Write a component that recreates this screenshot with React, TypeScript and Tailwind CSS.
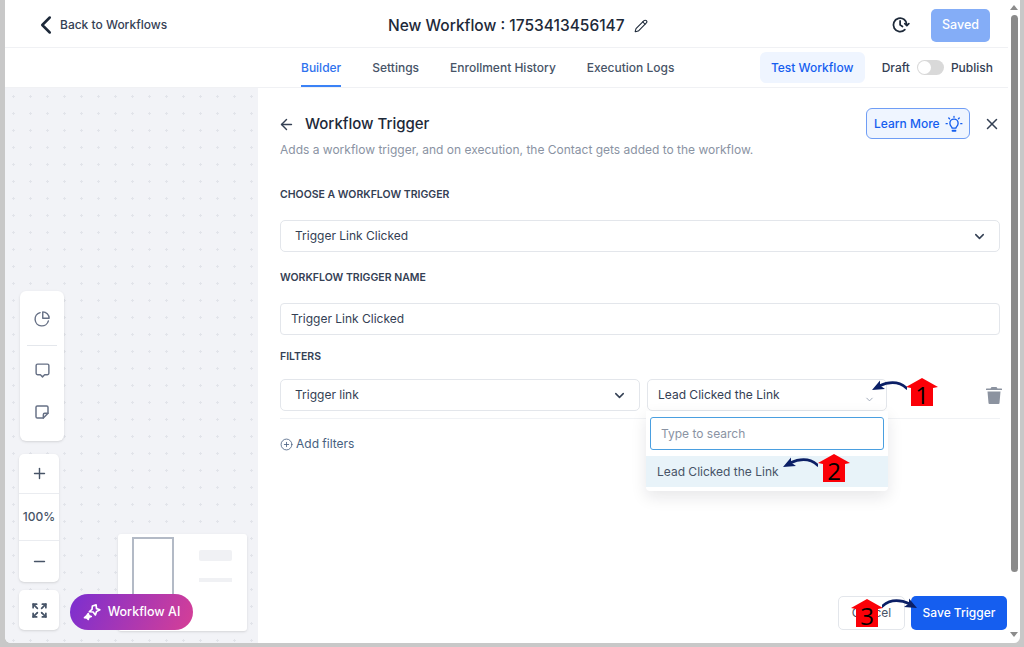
import { ArrowLeft, ChevronDown, ChevronLeft, CirclePlus, Expand, Minus, Pencil, Plus, X } from "lucide-react";

const labelClass = "text-[10.500px] leading-4 font-semibold uppercase text-[#344054]";

function SelectBox({ text, className }: { text: string; className: string }) {
  return (
    <div className={`flex items-center justify-between shrink-0 h-[32px] pl-[14px] pr-[12px] rounded-[5px] border border-[#e3e6eb] bg-white text-[12px] text-[#344054] ${className}`}>
      <span>{text}</span>
      <ChevronDown size={15} strokeWidth={2.400} className="text-[#344054]" />
    </div>
  );
}

function Marker({ n, className }: { n: string; className: string }) {
  return (
    <div className={`absolute w-[32px] h-[28px] ${className}`}>
      <svg viewBox="0 0 32 28" className="absolute inset-0 w-full h-full">
        <polygon points="16,0 32,9 27,10 27,28 5,28 5,10 0,9" fill="#fb0007" />
      </svg>
      <span className="absolute inset-0 pt-[4px] text-center text-[24px] leading-[26px] font-normal text-black font-['Open_Sans',sans-serif]">{n}</span>
    </div>
  );
}

function CurvedArrow({ className, flip }: { className: string; flip?: boolean }) {
  return (
    <svg viewBox="0 0 36 14" className={`absolute w-[36px] h-[14px] ${flip ? "-scale-x-100" : ""} ${className}`}>
      <path d="M36 9.500C29 3 20 1.500 8 7" fill="none" stroke="#0b1f66" strokeWidth="2.800" strokeLinecap="round" />
      <path d="M1 11L9 1.500L9 6.500L14 10Z" fill="#0b1f66" />
    </svg>
  );
}

function Canvas() {
  return (
    <div className="relative w-[253px] shrink-0 bg-[#f2f3f7] bg-[radial-gradient(#e2e4ea_1.2px,transparent_1.4px)] bg-[length:17px_17px] rounded-bl-[6px] overflow-hidden">
      <div className="absolute left-[15px] top-[203px] w-[44px] h-[150px] rounded-[6px] bg-white flex flex-col items-center shadow-sm">
        <svg viewBox="0 0 24 24" className="mt-[19px] w-[18px] h-[18px]" fill="none" stroke="#667085" strokeWidth="1.900" strokeLinecap="round" strokeLinejoin="round">
          <path d="M20.500 14.500A9 9 0 1 1 9.500 3.500" />
          <path d="M13 2.500a8.500 8.500 0 0 1 8.500 8.500H13Z" />
        </svg>
        <div className="mt-[17px] w-[30px] h-px bg-[#e4e7ec]" />
        <svg viewBox="0 0 24 24" className="mt-[16px] w-[17px] h-[17px]" fill="none" stroke="#667085" strokeWidth="2" strokeLinecap="round" strokeLinejoin="round">
          <path d="M5 3h14a2 2 0 0 1 2 2v11a2 2 0 0 1-2 2h-4l-3 3-3-3H5a2 2 0 0 1-2-2V5a2 2 0 0 1 2-2Z" />
        </svg>
        <svg viewBox="0 0 24 24" className="mt-[25px] w-[16px] h-[16px]" fill="none" stroke="#667085" strokeWidth="2.200" strokeLinecap="round" strokeLinejoin="round">
          <path d="M21 14V5a2 2 0 0 0-2-2H5a2 2 0 0 0-2 2v14a2 2 0 0 0 2 2h9Z" />
          <path d="M21 14h-5a2 2 0 0 0-2 2v5" />
        </svg>
      </div>
      <div className="absolute left-[14px] top-[366px] w-[40px] h-[128px] rounded-[5px] bg-white flex flex-col items-center text-[#475467] shadow-sm">
        <div className="h-[40px] w-full flex items-center justify-center border-b border-[#eaecf0]"><Plus size={17} strokeWidth={2} /></div>
        <div className="h-[47px] w-full flex items-center justify-center border-b border-[#eaecf0] text-[12px] font-medium">100%</div>
        <div className="flex-1 w-full flex items-center justify-center"><Minus size={17} strokeWidth={2} /></div>
      </div>
      <div className="absolute left-[14px] top-[502px] w-[40px] h-[40px] rounded-[5px] bg-white flex items-center justify-center text-[#475467] shadow-sm">
        <Expand size={17} strokeWidth={2.400} />
      </div>
      <div className="absolute left-[113px] top-[446px] w-[129px] h-[97px] rounded-[3px] bg-white shadow-sm">
        <div className="absolute left-[14px] top-[3px] w-[42px] h-[70px] border-2 border-[#b3bac6]" />
        <div className="absolute left-[81px] top-[16px] w-[33px] h-[11px] rounded-[2px] bg-[#f0f1f4]" />
        <div className="absolute left-[81px] top-[44px] w-[33px] h-[4px] bg-[#f0f1f4]" />
      </div>
      <div className="absolute left-[65px] top-[506px] w-[123px] h-[36px] rounded-full flex items-center justify-center gap-[7px] bg-[linear-gradient(115deg,#7b2fd0,#d63f96)] text-white text-[12.500px] font-medium">
        <svg viewBox="0 0 24 24" className="w-[18px] h-[18px]" fill="none" stroke="white" strokeWidth="2.200" strokeLinejoin="round">
          <path d="M17.500 2.500L18 7.500L22.500 9L18 11.500L16.500 16L13.500 12L8.500 11.500L12 8.500L12.500 4Z" />
          <path d="M7 14L8 17L11 18L8 19L7 22L5 20L2 19.500L4.500 17.500Z" fill="white" />
        </svg>
        Workflow AI
      </div>
    </div>
  );
}

function Panel() {
  return (
    <div className="relative flex-1 flex flex-col pl-[22px] pr-[8px] pt-[26px] pb-[13px] bg-white">
      <div className="flex items-start justify-between -mr-[1px]">
        <div>
          <div className="flex items-center gap-[10px] h-[20px]">
            <ArrowLeft size={17} strokeWidth={2} className="-ml-[2px] text-[#344054]" />
            <span className="text-[15px] font-medium text-[#1d2939]">Workflow Trigger</span>
          </div>
          <p className="mt-[8px] text-[12px] leading-4 text-[#8a93a3]">Adds a workflow trigger, and on execution, the Contact gets added to the workflow.</p>
        </div>
        <div className="flex items-center gap-[13px] -mt-[6px]">
          <div className="flex items-center justify-between w-[104px] h-[31px] pl-[7px] pr-[6px] rounded-[6px] border border-[#6f9df5] bg-[#eff5ff] text-[12px] font-medium text-[#155eef]">
            Learn More
            <svg viewBox="0 0 24 24" className="w-[18px] h-[18px]" fill="none" stroke="currentColor" strokeWidth="1.800" strokeLinecap="round" strokeLinejoin="round">
              <path d="M9.500 17.500c0-1.800-3-2.800-3-6.500a5.500 5.500 0 0 1 11 0c0 3.700-3 4.700-3 6.500Z" />
              <path d="M10 21h4" strokeWidth="2.400" />
              <path d="M12 2v1M5 4l1 1M19 4l-1 1M1.500 11.500H3M21 11.500h1.500" />
            </svg>
          </div>
          <X size={18} strokeWidth={2} className="text-[#344054]" />
        </div>
      </div>
      <div className={`mt-[29px] ${labelClass}`}>Choose a workflow trigger</div>
      <SelectBox text="Trigger Link Clicked" className="mt-[17px] w-[720px]" />
      <div className={`mt-[18px] ${labelClass}`}>Workflow trigger name</div>
      <div className="mt-[17px] flex items-center w-[720px] h-[32px] pl-[10px] rounded-[4px] border border-[#e3e6eb] text-[12px] text-[#344054]">Trigger Link Clicked</div>
      <div className={`mt-[14px] ${labelClass}`}>Filters</div>
      <div className="mt-[14px] flex items-center gap-[7px] w-[720px]">
        <SelectBox text="Trigger link" className="w-[360px]" />
        <div className="flex items-center justify-between shrink-0 w-[240px] h-[32px] pl-[10px] pr-[11px] rounded-[5px] border border-[#e3e6eb] text-[12px] text-[#344054]">
          <span>Lead Clicked the Link</span>
          <ChevronDown size={11} strokeWidth={2} className="mt-[8px] text-[#98a2b3]" />
        </div>
        <svg viewBox="0 0 16 17" className="ml-[92px] w-[16px] h-[17px] shrink-0" fill="#8c93a0">
          <path d="M5.500 0h5l1 1.500H15.500a.5.500 0 0 1 .5.500v1H0V2a.5.500 0 0 1 .5-.5h4Z" />
          <path d="M1.500 4.500h13l-1 11.500a1 1 0 0 1-1 1H3.500a1 1 0 0 1-1-1Z" />
        </svg>
      </div>
      <div className="mt-[7px] h-px w-[720px] bg-[#f0f2f5]" />
      <div className="mt-[16px] flex items-center gap-[3px] text-[12px] text-[#475f80]">
        <CirclePlus size={13} strokeWidth={1.500} />
        Add filters
      </div>
      <div className="absolute left-[388px] top-[323px] w-[242px] h-[80px] rounded-b-[4px] bg-white shadow-[0_6px_16px_rgba(16,24,40,0.10)] pt-[6px]">
        <div className="mx-[4px] h-[33px] flex items-center pl-[10px] rounded-[3px] border-[1.500px] border-[#4a9fe0] text-[12px] text-[#8a93a3]">Type to search</div>
        <div className="mt-[6px] h-[31px] flex items-center pl-[11px] bg-[#e8f3f9] text-[12px] text-[#475467]">Lead Clicked the Link</div>
      </div>
      <div className="mt-auto -mr-[7px] flex justify-end gap-[6px]">
        <div className="flex items-center justify-center w-[67px] h-[34px] rounded-[5px] border border-[#e3e6eb] text-[12px] text-[#475467]">Cancel</div>
        <div className="flex items-center justify-center w-[96px] h-[34px] rounded-[5px] bg-[#155eef] text-[12px] font-medium text-white">Save Trigger</div>
      </div>
    </div>
  );
}

export default function App() {
  return (
    <div className="relative w-[1024px] h-[647px] overflow-hidden bg-[#c8c8c8] font-['Inter',sans-serif]">
      <div className="flex w-[1015px] h-[643px] ml-[5px] bg-white rounded-b-[6px]">
        <div className="flex flex-col w-[1003px] h-full shrink-0">
          <div className="relative flex items-center justify-between h-[48px] shrink-0 border-b border-[#f0f1f4] pt-[4px] pl-[26px] pr-[18px]">
            <div className="flex items-center -mt-[1px] text-[12px] font-medium text-[#344054]">
              <ChevronLeft size={30} strokeWidth={2} className="-mr-[1px] text-[#1d2939]" />
              Back to Workflows
            </div>
            <div className="absolute left-[383px] top-[14px] flex items-center gap-[9px] text-[15.500px] font-medium text-[#1d2939]">
              New Workflow : 1753413456147
              <Pencil size={14} strokeWidth={1.800} />
            </div>
            <div className="flex items-center gap-[21px]">
              <svg viewBox="0 0 24 24" className="-mt-[3px] w-[19px] h-[19px] text-[#1d2939]" fill="none" stroke="currentColor" strokeWidth="2.200" strokeLinecap="round" strokeLinejoin="round">
                <path d="M20 12.500A8.500 8.500 0 1 0 17.500 18.500" />
                <path d="M11.500 7.500v5l3 2" />
                <path d="M17.500 11l2.500 2.500l2.500-2.500" />
              </svg>
              <div className="flex items-center justify-center w-[59px] h-[33px] rounded-[5px] bg-[#84adf7] text-[12.500px] font-medium text-white">Saved</div>
            </div>
          </div>
          <div className="relative flex items-center justify-between h-[39px] shrink-0 pl-[296px] pr-[15px]">
            <div className="flex items-center h-full gap-[31px] text-[12px] font-medium text-[#475467]">
              <div className="relative flex items-center h-full text-[#2f72ee]">
                Builder
                <div className="absolute left-0 right-0 bottom-0 h-[2px] bg-[#3b82f6]" />
              </div>
              <span>Settings</span>
              <span>Enrollment History</span>
              <span>Execution Logs</span>
            </div>
            <div className="flex items-center">
              <div className="flex items-center justify-center w-[105px] h-[31px] rounded-[6px] bg-[#eff5ff] text-[12px] font-medium text-[#155eef]">Test Workflow</div>
              <span className="ml-[17px] text-[12px] font-medium text-[#344054]">Draft</span>
              <div className="ml-[7px] w-[27px] h-[15px] rounded-full bg-[#d9d9d9] flex items-center pl-[1px]">
                <div className="w-[13px] h-[13px] rounded-full bg-white" />
              </div>
              <span className="ml-[7px] text-[12px] font-medium text-[#344054]">Publish</span>
            </div>
          </div>
          <div className="flex flex-1 border-t border-[#f0f1f4] min-h-0">
            <Canvas />
            <Panel />
          </div>
        </div>
        <div className="flex flex-col items-center w-[12px] h-full">
          <div className="mt-[5px] w-0 h-0 border-x-[4px] border-x-transparent border-b-[5px] border-b-[#8c8c8c]" />
          <div className="mt-[5px] w-[7px] h-[557px] rounded-full bg-[#8a8a8a]" />
          <div className="mt-auto mb-[6px] w-0 h-0 border-x-[4px] border-x-transparent border-t-[5px] border-t-[#8c8c8c]" />
        </div>
      </div>

      <Marker n="1" className="left-[906px] top-[378px]" />
      <CurvedArrow className="left-[871px] top-[379px]" />
      <Marker n="2" className="left-[818px] top-[454px]" />
      <CurvedArrow className="left-[782px] top-[456px]" />
      <Marker n="3" className="left-[851px] top-[599px]" />
      <CurvedArrow flip className="left-[882px] top-[597px]" />
    </div>
  );
}
